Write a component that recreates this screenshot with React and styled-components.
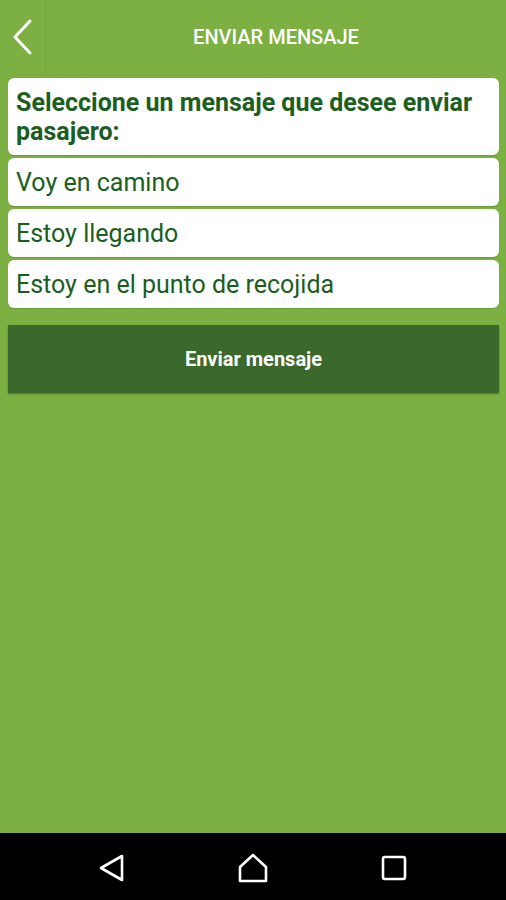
import React from "react";
import styled, { createGlobalStyle } from "styled-components";

const GlobalStyle = createGlobalStyle`
  html, body {
    margin: 0;
    padding: 0;
  }
  body {
    font-family: Roboto, "Liberation Sans", sans-serif;
  }
`;

const Screen = styled.div`
  display: flex;
  flex-direction: column;
  width: 506px;
  height: 900px;
  background: #7cb043;
`;

const Header = styled.div`
  display: flex;
  align-items: center;
  height: 75px;
  flex-shrink: 0;
`;

const BackButton = styled.button`
  display: flex;
  align-items: center;
  justify-content: center;
  width: 46px;
  height: 75px;
  padding: 0 0 2px 0;
  border: none;
  border-right: 1px solid rgba(60, 110, 30, 0.15);
  background: transparent;
`;

const Title = styled.div`
  flex: 1;
  text-align: center;
  color: #ffffff;
  font-size: 20px;
  font-weight: 500;
  padding: 0 0 2px 0;
`;

const Content = styled.div`
  flex: 1;
  display: flex;
  flex-direction: column;
  gap: 3px;
  padding: 3px 7px 0 8px;
`;

const Card = styled.div`
  background: #ffffff;
  border-radius: 6px;
  color: #1b5e20;
  font-size: 25px;
  box-shadow: 0 1px 1px rgba(0, 0, 0, 0.12);
`;

const HeadingCard = styled(Card)`
  font-weight: 700;
  line-height: 29px;
  padding: 10px 8px 9px 8px;
`;

const OptionCard = styled(Card)`
  display: flex;
  align-items: center;
  height: 48px;
  padding: 0 8px;
  cursor: pointer;
`;

const SendButton = styled.button`
  margin-top: 14px;
  height: 68px;
  border: none;
  border-radius: 1px;
  background: #3b692b;
  color: #ffffff;
  font-family: Roboto, "Liberation Sans", sans-serif;
  font-size: 20px;
  font-weight: 700;
  box-shadow: 0 1px 2px rgba(0, 0, 0, 0.35);
`;

const NavBar = styled.div`
  display: grid;
  grid-template-columns: repeat(3, 141px);
  justify-content: center;
  align-items: center;
  height: 67px;
  flex-shrink: 0;
  background: #000000;
`;

const NavItem = styled.div`
  display: flex;
  justify-content: center;
  padding-top: 3px;
`;

const messages = ["Voy en camino", "Estoy llegando", "Estoy en el punto de recojida"];

export default function App() {
  return (
    <>
      <GlobalStyle />
      <Screen>
        <Header>
          <BackButton aria-label="Volver">
            <svg width="22" height="36" viewBox="0 0 22 36" fill="none">
              <path d="M18 2 L3 18 L18 34" stroke="#ffffff" strokeWidth="3" strokeLinecap="round" strokeLinejoin="round" />
            </svg>
          </BackButton>
          <Title>ENVIAR MENSAJE</Title>
        </Header>
        <Content>
          <HeadingCard>Seleccione un mensaje que desee enviar pasajero:</HeadingCard>
          {messages.map((m) => (
            <OptionCard key={m}>{m}</OptionCard>
          ))}
          <SendButton>Enviar mensaje</SendButton>
        </Content>
        <NavBar>
          <NavItem>
            <svg width="28" height="30" viewBox="0 0 28 30" fill="none">
              <path d="M24 3 L3 15 L24 27 Z" stroke="#ffffff" strokeWidth="2.6" strokeLinejoin="round" />
            </svg>
          </NavItem>
          <NavItem>
            <svg width="32" height="30" viewBox="0 0 32 30" fill="none">
              <path d="M3 28 L3 14 L16 2 L29 14 L29 28 Z" stroke="#ffffff" strokeWidth="2.6" strokeLinejoin="round" />
            </svg>
          </NavItem>
          <NavItem>
            <svg width="26" height="26" viewBox="0 0 26 26" fill="none">
              <rect x="2" y="2" width="22" height="22" rx="2" stroke="#ffffff" strokeWidth="2.6" />
            </svg>
          </NavItem>
        </NavBar>
      </Screen>
    </>
  );
}
